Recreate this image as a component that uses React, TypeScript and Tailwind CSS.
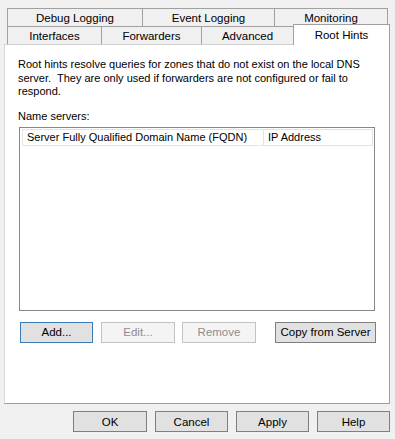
import React from "react";

const Tab = ({ label, w, last }: { label: string; w: number; last?: boolean }) => (
  <div
    className={`h-[18px] flex items-center justify-center bg-[#f0f0f0] border-t border-l border-[#a0a0a0] whitespace-nowrap ${last ? "border-r" : ""}`}
    style={{ width: w }}
  >
    {label}
  </div>
);

const Btn = ({
  label,
  w,
  kind = "normal",
}: {
  label: string;
  w: number;
  kind?: "normal" | "default" | "disabled";
}) => {
  const cls =
    kind === "default"
      ? "bg-[#e1e1e1] border-[#3d7bb5] text-black"
      : kind === "disabled"
      ? "bg-[#f4f4f4] border-[#c2c2c2] text-[#8d8d8d]"
      : "bg-[#e1e1e1] border-[#7f7f7f] text-black";
  return (
    <div
      className={`h-[21px] border flex items-center justify-center whitespace-nowrap ${cls}`}
      style={{ width: w }}
    >
      {label}
    </div>
  );
};

export default function App() {
  return (
    <div
      className="w-[395px] h-[439px] bg-[#f0f0f0] text-[11.5px] leading-[14px] text-black overflow-hidden"
      style={{ fontFamily: '"Liberation Sans", Arial, sans-serif' }}
    >
      {/* Tabs */}
      <div className="pt-[8px] pl-[7px]">
        <div className="flex">
          <Tab label="Debug Logging" w={135} />
          <Tab label="Event Logging" w={132} />
          <Tab label="Monitoring" w={114} last />
        </div>
        <div className="flex items-end h-[18px]">
          <Tab label="Interfaces" w={94} />
          <Tab label="Forwarders" w={100} />
          <Tab label="Advanced" w={92} />
          <div className="relative z-10 w-[97px] h-[21px] -mb-[1px] mt-[-3px] bg-white border-t border-l border-r border-[#a0a0a0] flex items-start justify-center pt-[3px]">
            Root Hints
          </div>
        </div>
      </div>

      {/* Panel */}
      <div className="ml-[4px] w-[386px] h-[360px] bg-white border border-t-[#d0d0d0] border-l-[#d9d9d9] border-r-[#a0a0a0] border-b-[#a0a0a0] pl-[13px] pt-[13px]">
        <div className="whitespace-pre leading-[13.5px] text-[11px]">
          {"Root hints resolve queries for zones that do not exist on the local DNS\nserver.  They are only used if forwarders are not configured or fail to\nrespond."}
        </div>
        <div className="mt-[10px] text-[11px]">Name servers:</div>
        <div className="mt-[4px] ml-[1px] w-[356px] h-[184px] border border-[#828790] pt-[1px] pl-[2px] text-[11px]">
          <div className="flex h-[17px]">
            <div className="w-[242px] border border-[#e3e3e3] flex items-center pl-[4px] whitespace-nowrap">
              Server Fully Qualified Domain Name (FQDN)
            </div>
            <div className="w-[109px] border border-l-0 border-[#e3e3e3] flex items-center pl-[4px] whitespace-nowrap">
              IP Address
            </div>
          </div>
        </div>
        <div className="flex mt-[11px] ml-[2px]">
          <Btn label="Add..." w={73} kind="default" />
          <div className="ml-[8px]">
            <Btn label="Edit..." w={74} kind="disabled" />
          </div>
          <div className="ml-[7px]">
            <Btn label="Remove" w={74} kind="disabled" />
          </div>
          <div className="ml-[19px]">
            <Btn label="Copy from Server" w={101} />
          </div>
        </div>
      </div>

      {/* Bottom buttons */}
      <div className="flex gap-[8px] pl-[73px] mt-[7px]">
        <Btn label="OK" w={74} />
        <Btn label="Cancel" w={73} />
        <Btn label="Apply" w={73} />
        <Btn label="Help" w={73} />
      </div>
    </div>
  );
}
